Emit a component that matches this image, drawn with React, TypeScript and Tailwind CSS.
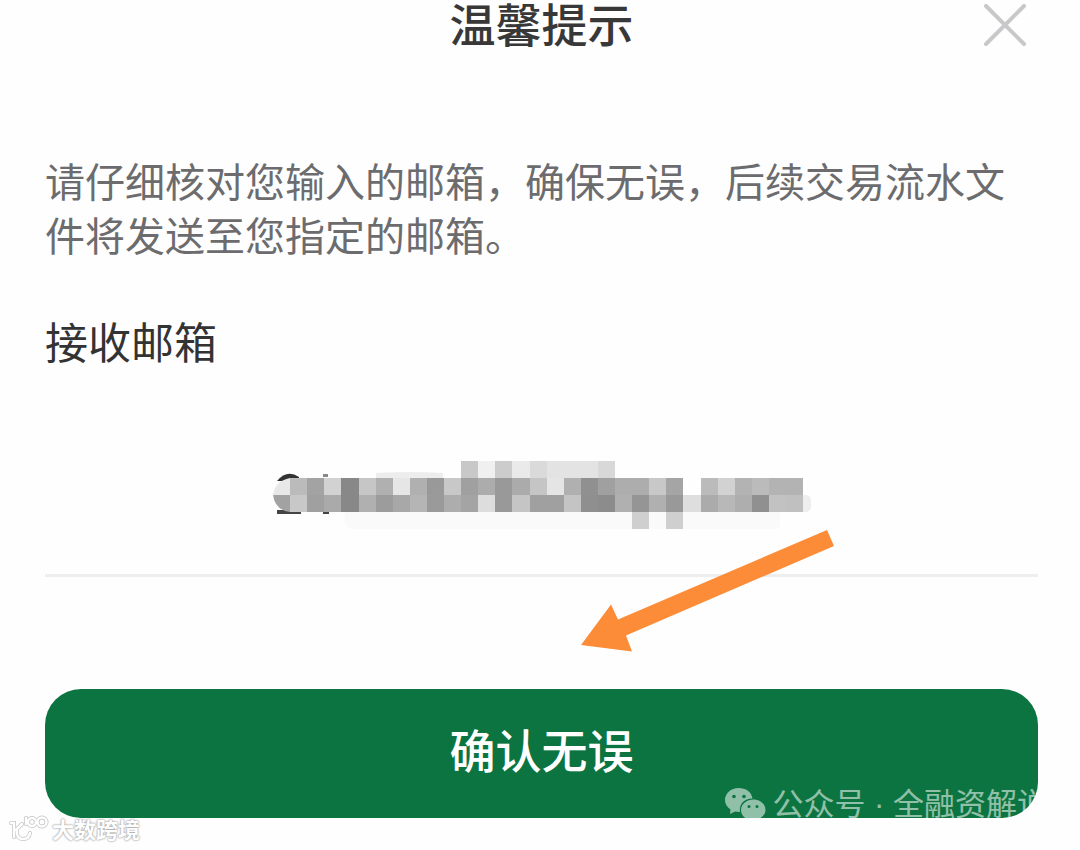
const CELL = 17;

// one entry per cell, empty string = nothing painted
const MOSAIC_ROWS: string[][] = [
  [
    "", "", "", "", "", "", "", "", "", "", "", "#c8c8c8", "#f0f0f0", "#cccccc", "#eaeaea", "#dadada",
    "#e3e3e3", "#e3e3e3", "#e3e3e3", "#d8d8d8",
  ],
  [
    "", "#bbbbbb", "#a3a3a3", "#d2d2d2", "#888888", "#c6c6c6", "#b0b0b0", "#e6e6e6", "#b0b0b0", "#999999",
    "#c8c8c8", "#a0a0a0", "#acacac", "#999999", "#ababab", "#c5c5c5", "#e5e5e5", "#b0b0b0", "#909090",
    "#a0a0a0", "#adadad", "#adadad", "#c8c8c8", "#a5a5a5", "", "#bbbbbb", "#d2d2d2", "#b3b3b3", "#bbbbbb",
    "#b3b3b3", "#b3b3b3",
  ],
  [
    "", "#c8c8c8", "#a0a0a0", "#aaaaaa", "#888888", "#b0b0b0", "#9c9c9c", "#a8a8a8", "#b5b5b5", "#9a9a9a",
    "#adadad", "#a4a4a4", "#dddddd", "#999999", "#c5c5c5", "#a0a0a0", "#a0a0a0", "#c4c4c4", "#8f8f8f",
    "#8c8c8c", "#b0b0b0", "#959595", "#b0b0b0", "#999999", "#dedede", "#ababab", "#b8b8b8", "#aeaeae",
    "#909090", "#c2c2c2", "#c0c0c0",
  ],
  [
    "", "", "", "", "", "", "", "", "", "", "", "", "", "", "", "", "", "", "", "", "", "#cfcfcf", "",
    "#cfcfcf",
  ],
];

function MaskedEmail() {
  return (
    <svg
      role="img"
      aria-label="邮箱"
      viewBox="0 0 538 68"
      className="mx-auto block h-[68px] w-[538px] max-w-full"
    >
      <path d="M72 51h435v12q0 5-6 5H80q-8 0-8-8z" fill="#fafafa" />
      <path d="M103 17V12q34-2 67 0v5z" fill="#ededed" />
      <path d="M4 20q10-12 22-4v4z" fill="#333" />
      <path d="M4 49h24v4H4zM50 49h6v4h-6z" fill="#444" />
      <path d="M50 13h5v3h-5z" fill="#888" />
      <path d="M17 17v17H0Q2 20 17 17z" fill="#e8e8e8" />
      <path d="M17 34v17Q2 49 0 34z" fill="#a2a2a2" />
      <path d="M527 34h6q5 0 5 6v5q0 6-6 6h-5z" fill="#eeeeee" />
      <g transform="scale(1.006 1)" shapeRendering="crispEdges">
        {MOSAIC_ROWS.map((row, y) =>
          row.map((fill, x) =>
            fill ? (
              <rect key={`${y}-${x}`} x={x * CELL} y={y * CELL} width={CELL} height={CELL} fill={fill} />
            ) : null
          )
        )}
      </g>
    </svg>
  );
}

function Arrow() {
  return (
    <svg
      aria-hidden="true"
      viewBox="0 0 254 122"
      className="pointer-events-none absolute left-1/2 top-[69px] ml-[39px] h-[122px] w-[254px]"
    >
      <path d="M0 115 30 74.500 37 89.500 246 0 253 16 45 105.500 51 121.500z" fill="#fc8c38" />
    </svg>
  );
}

function WechatMark() {
  return (
    <svg aria-hidden="true" viewBox="0 0 42 34" className="h-[34px] w-[42px]">
      <path
        d="M14.500 1C7 1 1 6.500 1 13c0 4 2 7 5.500 9.500L6 27l5-2.500 5 .5C15 17 20 11.500 28.500 11.500 27.500 5 22 1 14.500 1z"
        fill="#fff"
      />
      <path
        d="M29.500 12.500C23 12.500 17 17 17 23s5.500 10.500 12.500 10.500l4-.8L38 34l-1-3.500c3-2 4.500-4.500 4.500-7.500 0-6-5.500-10.500-12-10.500z"
        fill="#fff"
      />
      <g fill="#0b7440">
        <circle cx="10" cy="9.500" r="1.800" />
        <circle cx="20" cy="9.500" r="1.800" />
        <circle cx="25" cy="19.500" r="1.500" />
        <circle cx="33" cy="19.500" r="1.500" />
      </g>
    </svg>
  );
}

function SiteLogo() {
  const strokes = (
    <>
      <path d="M3 8h3v14" />
      <path d="M14 9 8 15" />
      <path d="M9 15q-1 9 6 9 6 0 7-6" />
      <circle cx="24" cy="7" r="4" />
      <circle cx="34" cy="7" r="4.500" />
      <path d="M18 3v6" />
    </>
  );

  return (
    <svg aria-hidden="true" viewBox="0 0 42 27" fill="none" strokeLinecap="round" className="h-[27px] w-[42px]">
      <g stroke="#c4c4c4" strokeWidth="4">
        {strokes}
      </g>
      <g stroke="#fff" strokeWidth="2.500">
        {strokes}
      </g>
    </svg>
  );
}

export default function App() {
  return (
    <div className="relative min-h-screen w-full overflow-x-clip bg-[#fefefe] pb-7 pl-[45px] pr-[42px] font-['Noto_Sans_CJK_SC',sans-serif]">
      <header className="relative flex h-11 items-center justify-center">
        <h1 className="text-[46px] font-medium leading-[44px] text-[#383838]">温馨提示</h1>
        <button type="button" aria-label="关闭" className="absolute right-3 top-1 h-[42px] w-[42px]">
          <svg viewBox="0 0 42 42" className="h-full w-full" stroke="#c8c8ca" strokeWidth="4" strokeLinecap="round">
            <path d="M2 2 40 40M40 2 2 40" />
          </svg>
        </button>
      </header>

      <main>
        <p className="mt-[109px] text-[40px] leading-[54px] text-[#6c6c6e]">
          请仔细核对您输入的邮箱，确保无误，后续交易流水文件将发送至您指定的邮箱。
        </p>

        <h2 className="mt-[52px] text-[43px] leading-[54px] text-[#333]">接收邮箱</h2>

        <section className="relative mt-[94px] border-b-[3px] border-[#eeeeef] pb-[45px]">
          <MaskedEmail />
          <Arrow />
        </section>

        <div className="relative mt-[112px]">
          <button
            type="button"
            className="h-[129px] w-full rounded-[36px] bg-[#0b7440] pb-3 text-[46px] font-medium leading-[50px] text-white"
          >
            确认无误
          </button>
          <div className="pointer-events-none absolute -right-2.5 bottom-[-9px] flex items-center gap-1.5 whitespace-nowrap text-[31px] leading-[44px] text-white opacity-55">
            <WechatMark />
            <span>
              公众号<span className="font-['Liberation_Sans']"> · </span>全融资解说
            </span>
          </div>
        </div>
      </main>

      <div className="absolute bottom-2 left-2 flex items-center gap-0.5 text-[22px] font-bold leading-7 text-white [text-shadow:0_0_2px_#999,0_0_2px_#aaa]">
        <SiteLogo />
        <span>大数跨境</span>
      </div>
    </div>
  );
}
